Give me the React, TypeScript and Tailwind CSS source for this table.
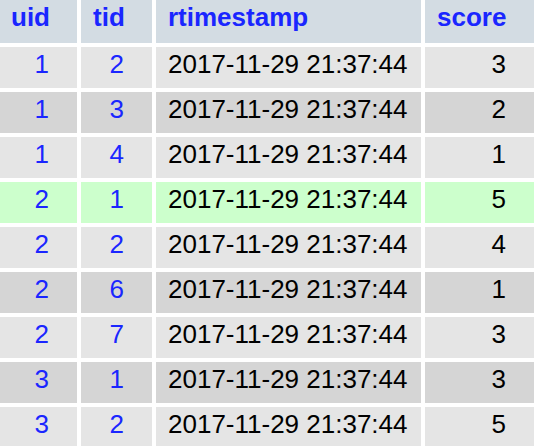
const rows: { uid: number; tid: number; score: number; marked?: boolean }[] = [
  { uid: 1, tid: 2, score: 3 },
  { uid: 1, tid: 3, score: 2 },
  { uid: 1, tid: 4, score: 1 },
  { uid: 2, tid: 1, score: 5, marked: true },
  { uid: 2, tid: 2, score: 4 },
  { uid: 2, tid: 6, score: 1 },
  { uid: 2, tid: 7, score: 3 },
  { uid: 3, tid: 1, score: 3 },
  { uid: 3, tid: 2, score: 5 },
];

const TIMESTAMP = '2017-11-29 21:37:44';

export default function App(): JSX.Element {
  return (
    <div className="h-[446px] w-[534px] overflow-hidden bg-white font-['Liberation_Sans',Arial,sans-serif] text-[26px] leading-[29px]">
      <div className="grid grid-cols-[77px_71px_265px_109px] gap-1">
        {/* Header */}
        <div className="h-[43px] bg-[#d3dce3] pl-[11px] pt-[3px] font-bold text-[#1a26ff]">uid</div>
        <div className="h-[43px] bg-[#d3dce3] pl-3 pt-[3px] font-bold text-[#1a26ff]">tid</div>
        <div className="h-[43px] bg-[#d3dce3] pl-3 pt-[3px] font-bold text-[#1a26ff]">rtimestamp</div>
        <div className="h-[43px] bg-[#d3dce3] pl-3 pt-[3px] font-bold text-[#1a26ff]">score</div>

        {rows.map((row, i) => {
          const bg = row.marked ? 'bg-[#ccffcc]' : i % 2 === 0 ? 'bg-[#e5e5e5]' : 'bg-[#d5d5d5]';
          return (
            <div key={i} className="contents">
              <div className={`h-[41px] pr-[28px] pt-[3px] text-right text-[#1a26ff] ${bg}`}>{row.uid}</div>
              <div className={`h-[41px] pr-[28px] pt-[3px] text-right text-[#1a26ff] ${bg}`}>{row.tid}</div>
              <div className={`h-[41px] pl-3 pt-[3px] text-black ${bg}`}>{TIMESTAMP}</div>
              <div className={`h-[41px] pr-[28px] pt-[3px] text-right text-black ${bg}`}>{row.score}</div>
            </div>
          );
        })}
      </div>
    </div>
  );
}
